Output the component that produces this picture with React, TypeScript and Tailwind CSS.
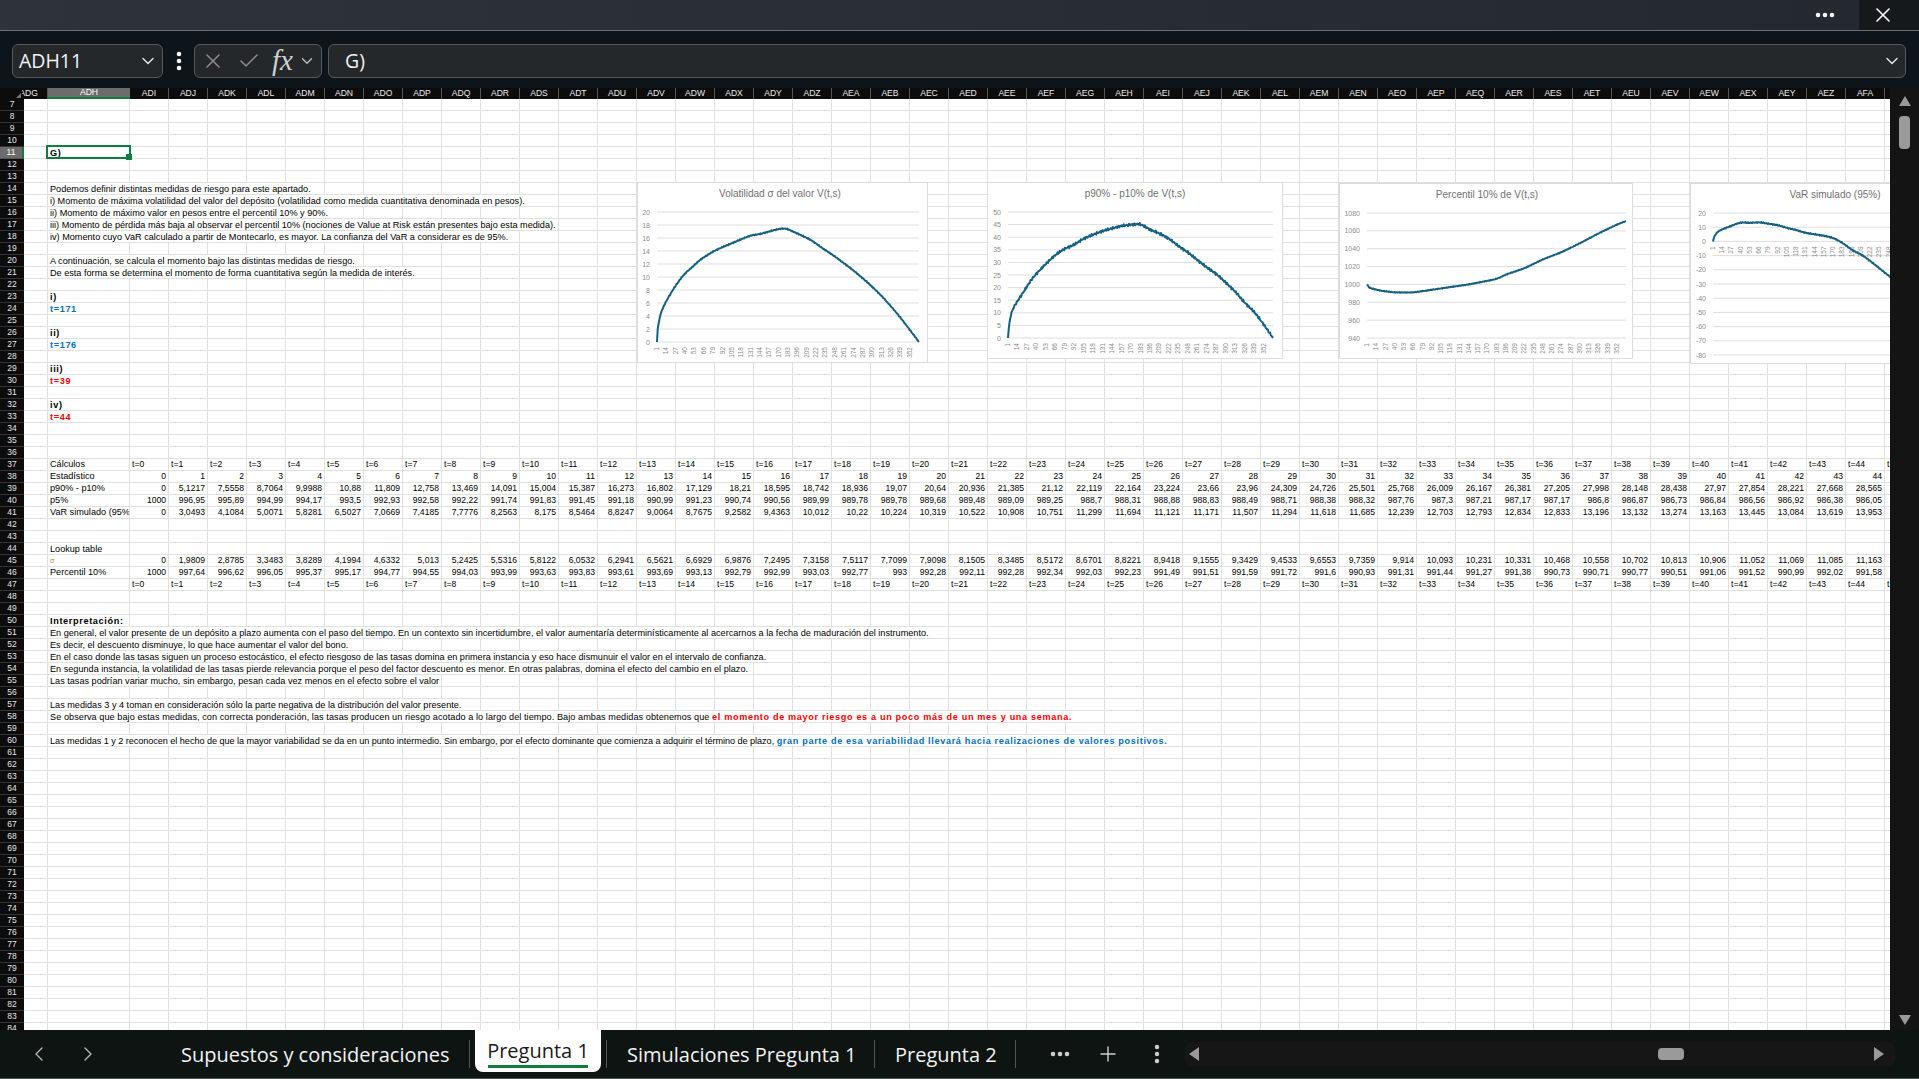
import type { ReactNode } from 'react';
import { Check, ChevronDown, ChevronLeft, ChevronRight, EllipsisVertical, Ellipsis, Plus, X } from 'lucide-react';

const letters = 'ABCDEFGHIJKLMNOPQRSTUVWXYZ'.split('');
const columnNames = [
  ...letters.slice(8).map((l) => `AD${l}`),
  ...letters.map((l) => `AE${l}`),
  'AFA',
  'AFB',
];

const firstRow = 7;
const lastRow = 84;

const tLabels = Array.from({ length: 46 }, (_, i) => `t=${i}`);
const counters = Array.from({ length: 45 }, (_, i) => String(i));

const p90p10 = '0 5,1217 7,5558 8,7064 9,9988 10,88 11,809 12,758 13,469 14,091 15,004 15,387 16,273 16,802 17,129 18,21 18,595 18,742 18,936 19,07 20,64 20,936 21,385 21,12 22,119 22,164 23,224 23,66 23,96 24,309 24,726 25,501 25,768 26,009 26,167 26,381 27,205 27,998 28,148 28,438 27,97 27,854 28,221 27,668 28,565'.split(' ');
const p5 = '1000 996,95 995,89 994,99 994,17 993,5 992,93 992,58 992,22 991,74 991,83 991,45 991,18 990,99 991,23 990,74 990,56 989,99 989,78 989,78 989,68 989,48 989,09 989,25 988,7 988,31 988,88 988,83 988,49 988,71 988,38 988,32 987,76 987,3 987,21 987,17 987,17 986,8 986,87 986,73 986,84 986,56 986,92 986,38 986,05'.split(' ');
const varSim = '0 3,0493 4,1084 5,0071 5,8281 6,5027 7,0669 7,4185 7,7776 8,2563 8,175 8,5464 8,8247 9,0064 8,7675 9,2582 9,4363 10,012 10,22 10,224 10,319 10,522 10,908 10,751 11,299 11,694 11,121 11,171 11,507 11,294 11,618 11,685 12,239 12,703 12,793 12,834 12,833 13,196 13,132 13,274 13,163 13,445 13,084 13,619 13,953'.split(' ');
const sigma = '0 1,9809 2,8785 3,3483 3,8289 4,1994 4,6332 5,013 5,2425 5,5316 5,8122 6,0532 6,2941 6,5621 6,6929 6,9876 7,2495 7,3158 7,5117 7,7099 7,9098 8,1505 8,3485 8,5172 8,6701 8,8221 8,9418 9,1555 9,3429 9,4533 9,6553 9,7359 9,914 10,093 10,231 10,331 10,468 10,558 10,702 10,813 10,906 11,052 11,069 11,085 11,163'.split(' ');
const p10 = '1000 997,64 996,62 996,05 995,37 995,17 994,77 994,55 994,03 993,99 993,63 993,83 993,61 993,69 993,13 992,79 992,99 993,03 992,77 993 992,28 992,11 992,28 992,34 992,03 992,23 991,49 991,51 991,59 991,72 991,6 990,93 991,31 991,44 991,27 991,38 990,73 990,71 990,77 990,51 991,06 991,52 990,99 992,02 991,58'.split(' ');

const dataRows: Record<number, { label: ReactNode; values: string[]; left?: boolean }> = {
  37: { label: 'Cálculos', values: tLabels, left: true },
  38: { label: 'Estadístico', values: counters },
  39: { label: 'p90% - p10%', values: p90p10 },
  40: { label: 'p5%', values: p5 },
  41: { label: 'VaR simulado (95%)', values: varSim },
  45: { label: <span className="text-[7px] text-[#c8772a]">σ</span>, values: sigma },
  46: { label: 'Percentil 10%', values: p10 },
  47: { label: '', values: tLabels, left: true },
};

const bold = (text: string) => <b className="tracking-[0.65px]">{text}</b>;
const blue = (text: string) => <b className="tracking-[0.65px] text-[#0070c0]">{text}</b>;
const red = (text: string) => <b className="tracking-[0.65px] text-[#ff0000]">{text}</b>;

const textRows: Record<number, ReactNode> = {
  11: bold('G)'),
  14: 'Podemos definir distintas medidas de riesgo para este apartado.',
  15: 'i) Momento de máxima volatilidad del valor del depósito (volatilidad como medida cuantitativa denominada en pesos).',
  16: 'ii) Momento de máximo valor en pesos entre el percentil 10% y 90%.',
  17: 'iii) Momento de pérdida más baja al observar el percentil 10% (nociones de Value at Risk están presentes bajo esta medida).',
  18: 'iv) Momento cuyo VaR calculado a partir de Montecarlo, es mayor. La confianza del VaR a considerar es de 95%.',
  20: 'A continuación, se calcula el momento bajo las distintas medidas de riesgo.',
  21: 'De esta forma se determina el momento de forma cuantitativa según la medida de interés.',
  23: bold('i)'),
  24: blue('t=171'),
  26: bold('ii)'),
  27: blue('t=176'),
  29: bold('iii)'),
  30: red('t=39'),
  32: bold('iv)'),
  33: red('t=44'),
  44: 'Lookup table',
  50: bold('Interpretación:'),
  51: 'En general, el valor presente de un depósito a plazo aumenta con el paso del tiempo. En un contexto sin incertidumbre, el valor aumentaría determinísticamente al acercarnos a la fecha de maduración del instrumento.',
  52: 'Es decir, el descuento disminuye, lo que hace aumentar el valor del bono.',
  53: 'En el caso donde las tasas siguen un proceso estocástico, el efecto riesgoso de las tasas domina en primera instancia y eso hace dismunuir el valor en el intervalo de confianza.',
  54: 'En segunda instancia, la volatilidad de las tasas pierde relevancia porque el peso del factor descuento es menor. En otras palabras, domina el efecto del cambio en el plazo.',
  55: 'Las tasas podrían variar mucho, sin embargo, pesan cada vez menos en el efecto sobre el valor',
  57: 'Las medidas 3 y 4 toman en consideración sólo la parte negativa de la distribución del valor presente.',
  58: (
    <>
      <span className="tracking-[0.06px]">Se observa que bajo estas medidas, con correcta ponderación, las tasas producen un riesgo acotado a lo largo del tiempo. Bajo ambas medidas obtenemos que </span>
      {red('el momento de mayor riesgo es a un poco más de un mes y una semana.')}
    </>
  ),
  60: (
    <>
      <span className="tracking-[-0.05px]">Las medidas 1 y 2 reconocen el hecho de que la mayor variabilidad se da en un punto intermedio. Sin embargo, por el efecto dominante que comienza a adquirir el término de plazo, </span>
      {blue('gran parte de esa variabilidad llevará hacia realizaciones de valores positivos.')}
    </>
  ),
};

type ChartDef = {
  title: string;
  titleX: number;
  box: string;
  width: number;
  height: number;
  left: number;
  right: number;
  top: number;
  bottom: number;
  ticks: number[];
  axis: number;
  noise: number;
  points: [number, number][];
};

const charts: ChartDef[] = [
  {
    title: 'Volatilidad σ del valor V(t,s)',
    titleX: 142,
    box: 'left-[637px] top-[94px] w-[291px] h-[181px]',
    width: 291,
    height: 181,
    left: 19,
    right: 281,
    top: 29,
    bottom: 159,
    ticks: [20, 18, 16, 14, 12, 10, 8, 6, 4, 2, 0],
    axis: 0,
    noise: 0.09,
    points: [[1, 0], [2, 2], [5, 4], [10, 5.5], [20, 7.5], [30, 9.2], [40, 10.6], [50, 11.5], [60, 12.6], [70, 13.3], [80, 14], [92, 14.6], [105, 15.2], [118, 15.8], [131, 16.4], [144, 16.6], [157, 17], [170, 17.4], [180, 17.5], [190, 17], [200, 16.5], [215, 15.7], [230, 14.5], [245, 13.4], [261, 12.1], [274, 11], [287, 9.8], [300, 8.5], [313, 7.1], [326, 5.5], [339, 3.8], [352, 1.9], [365, 0]],
  },
  {
    title: 'p90% - p10% de V(t,s)',
    titleX: 147,
    box: 'left-[987px] top-[94px] w-[296px] h-[177px]',
    width: 296,
    height: 177,
    left: 20,
    right: 285,
    top: 29,
    bottom: 155,
    ticks: [50, 45, 40, 35, 30, 25, 20, 15, 10, 5, 0],
    axis: 0,
    noise: 0.55,
    points: [[1, 0], [3, 7], [8, 12], [15, 15], [25, 19.5], [35, 24], [45, 27], [55, 30], [66, 33], [79, 35.5], [92, 37], [105, 39.5], [118, 41], [131, 42.5], [144, 43.5], [157, 44.5], [170, 45], [183, 45.3], [196, 43], [209, 41.5], [222, 39.5], [235, 36.5], [248, 34], [261, 31], [274, 28], [287, 25.5], [300, 22], [313, 18.5], [326, 14], [339, 10.5], [352, 5.5], [365, 0]],
  },
  {
    title: 'Percentil 10% de V(t,s)',
    titleX: 147,
    box: 'left-[1339px] top-[95px] w-[294px] h-[176px]',
    width: 294,
    height: 176,
    left: 27,
    right: 286,
    top: 29,
    bottom: 154,
    ticks: [1080, 1060, 1040, 1020, 1000, 980, 960, 940],
    axis: 940,
    noise: 0.45,
    points: [[1, 1000], [5, 996], [20, 993], [40, 991], [66, 991], [92, 994], [118, 997], [144, 1000], [170, 1004], [183, 1006], [196, 1011], [222, 1018], [248, 1028], [274, 1036], [300, 1046], [326, 1057], [352, 1067], [365, 1071]],
  },
  {
    title: 'VaR simulado (95%)',
    titleX: 144,
    box: 'left-[1690px] top-[95px] w-[294px] h-[181px]',
    width: 294,
    height: 181,
    left: 22,
    right: 281,
    top: 29,
    bottom: 171,
    ticks: [20, 10, 0, -10, -20, -30, -40, -50, -60, -70, -80],
    axis: 0,
    noise: 0.4,
    points: [[1, 0], [3, 4], [8, 7], [14, 8.5], [27, 11], [40, 13.5], [53, 13], [66, 13.5], [79, 12.5], [92, 11.5], [105, 9.5], [118, 8], [131, 6], [144, 5], [157, 4], [170, 2.5], [183, -1], [196, -6], [212, -10], [225, -15], [245, -23], [270, -33], [300, -46], [330, -60], [365, -75]],
  },
];

const xTicks = Array.from({ length: 28 }, (_, i) => 1 + i * 13);

function valueAt(points: [number, number][], t: number) {
  for (let i = 1; i < points.length; i++) {
    const [t0, v0] = points[i - 1];
    const [t1, v1] = points[i];
    if (t <= t1) return v0 + ((v1 - v0) * (t - t0)) / (t1 - t0);
  }
  return points[points.length - 1][1];
}

// piecewise points read off the picture, averaged so the kinks go away, the start stays steep
function smoothAt(points: [number, number][], t: number) {
  const reach = Math.min(5, Math.floor(t / 3), 365 - t);
  let sum = 0;
  for (let k = -reach; k <= reach; k++) sum += valueAt(points, t + k);
  return sum / (reach * 2 + 1);
}

function LineChart({ chart }: { chart: ChartDef }) {
  const max = chart.ticks[0];
  const min = chart.ticks[chart.ticks.length - 1];
  const x = (t: number) => chart.left + ((t - 1) * (chart.right - chart.left)) / 364;
  const y = (v: number) => chart.top + ((max - v) * (chart.bottom - chart.top)) / (max - min);
  const path: string[] = [];
  for (let t = 1; t <= 365; t++) {
    const edge = t < 4 || t > 362 ? 0 : 1;
    const wobble = edge * chart.noise * Math.sin(t * 12.9898) * Math.cos(t * 4.1414);
    path.push(`${x(t).toFixed(1)},${y(smoothAt(chart.points, t) + wobble).toFixed(1)}`);
  }
  return (
    <div className={`absolute z-20 border border-[#dcdcdc] bg-white ${chart.box}`}>
      <svg width={chart.width - 2} height={chart.height - 2} className="block font-['Liberation_Sans',sans-serif]">
        <text x={chart.titleX} y={14} textAnchor="middle" fontSize="10" fill="#707070">
          {chart.title}
        </text>
        {chart.ticks.map((tick) => (
          <g key={tick}>
            <line x1={chart.left} x2={chart.right} y1={y(tick)} y2={y(tick)} stroke="#dedede" strokeWidth="1" />
            <text x={chart.left - 7} y={y(tick) + 2.5} textAnchor="end" fontSize="7" fill="#8c8c8c">
              {tick}
            </text>
          </g>
        ))}
        {xTicks.map((tick) => (
          <text
            key={tick}
            x={x(tick) + 2}
            y={y(chart.axis) + 5}
            textAnchor="end"
            fontSize="6.5"
            fill="#8c8c8c"
            transform={`rotate(-90 ${x(tick) + 2} ${y(chart.axis) + 5})`}
          >
            {tick}
          </text>
        ))}
        <polyline points={path.join(' ')} fill="none" stroke="#156082" strokeWidth="2" strokeLinejoin="round" />
      </svg>
    </div>
  );
}

function LeadCell({ row }: { row: number }) {
  const data = dataRows[row];
  const text = textRows[row];
  return (
    <div className={`relative h-3 w-[82px] shrink-0 border-r border-b border-[#e0e0e0] text-[9.15px] ${data ? 'overflow-hidden' : ''}`}>
      {data && <span className="block whitespace-nowrap pl-[2px] leading-[11px]">{data.label}</span>}
      {text && <span className="relative z-10 inline-block h-[11px] whitespace-nowrap bg-white pl-[2px] pr-[1px] align-top leading-[12px]">{text}</span>}
      {row === 11 && (
        <div className="absolute top-[-2px] left-[-2px] z-10 h-[14px] w-[85px] border-2 border-[#107c41]">
          <div className="absolute right-[-3px] bottom-[-3px] h-[6px] w-[6px] bg-[#107c41]" />
        </div>
      )}
    </div>
  );
}

function SheetRow({ row }: { row: number }) {
  const data = dataRows[row];
  const active = row === 11;
  return (
    <div className="flex h-3">
      <div className={`flex h-3 w-6 shrink-0 items-center justify-center border-b text-[8.5px] ${active ? 'border-b-[#555] border-r-2 border-r-[#107c41] bg-[#6c6c6c] text-white' : 'border-b-[#333] bg-[#0c0c0c] text-[#e4e4e4]'}`}>
        {row}
      </div>
      <div className="h-3 w-6 shrink-0 border-r border-b border-[#e0e0e0]" />
      <LeadCell row={row} />
      {columnNames.map((name, i) => (
        <div
          key={name}
          className={`h-3 w-[39px] shrink-0 overflow-hidden whitespace-nowrap border-r border-b border-[#e0e0e0] leading-[11px] ${data?.left ? 'pl-[2px] text-left' : 'pr-[2px] text-right'}`}
        >
          {data?.values[i]}
        </div>
      ))}
    </div>
  );
}

function Sheet() {
  const rows = Array.from({ length: lastRow - firstRow + 1 }, (_, i) => firstRow + i);
  return (
    <div className="relative h-[942px] w-[1890px] shrink-0 overflow-hidden bg-white font-['Liberation_Sans',sans-serif] text-[8.6px] text-black">
      <div className="flex h-[11px] bg-[#0c0c0c] text-[8.6px] leading-[11px] text-[#e8e8e8]">
        <div className="relative z-10 w-[22px] shrink-0 bg-[#0c0c0c]">
          <span className="absolute right-[1px] bottom-[1px] h-0 w-0 border-b-[5px] border-l-[5px] border-b-[#777] border-l-transparent" />
        </div>
        <div className="flex w-[26px] shrink-0 justify-end border-r border-[#555] pr-[9px]">ADG</div>
        <div className="w-[82px] shrink-0 border-b-2 border-[#107c41] bg-[#6c6c6c] text-center leading-[9px] text-white">ADH</div>
        {columnNames.map((name) => (
          <div key={name} className="w-[39px] shrink-0 border-r border-[#555] text-center">
            {name}
          </div>
        ))}
      </div>
      {rows.map((row) => (
        <SheetRow key={row} row={row} />
      ))}
      {charts.map((chart) => (
        <LineChart key={chart.title} chart={chart} />
      ))}
    </div>
  );
}

function VerticalScroll() {
  return (
    <div className="relative flex h-[942px] w-[29px] flex-col items-center bg-[#141414] pt-2">
      <span className="h-0 w-0 border-x-[6px] border-b-[10px] border-x-transparent border-b-[#999]" />
      <div className="mt-[10px] h-[33px] w-[11px] rounded-[4px] bg-[#9a9a9a]" />
      <span className="absolute bottom-[5px] h-0 w-0 border-x-[6px] border-t-[10px] border-x-transparent border-t-[#999]" />
    </div>
  );
}

function TopBars() {
  return (
    <>
      <div className="flex h-[31px] items-center justify-end border-b border-[#6a6e70] bg-gradient-to-r from-[#2d3338] to-[#23292e] text-white">
        <Ellipsis className="mr-[22px] h-6 w-6" strokeWidth={2.5} />
        <div className="flex h-[30px] w-[60px] items-center justify-start bg-[#15191c] pl-[12px]">
          <X className="h-6 w-6" strokeWidth={1.6} />
        </div>
      </div>
      <div className="flex h-[57px] items-center bg-[#0e151a] pt-[2px] pr-[13px] pl-3 font-['Open_Sans',sans-serif] text-[#f2f2f2]">
        <div className="flex h-[34px] w-[151px] items-center justify-between rounded-[6px] border border-[#55595c] bg-[#25282b] pr-1 pl-[6px] text-[19.5px]">
          ADH11
          <ChevronDown className="h-5 w-5 text-[#e0e0e0]" strokeWidth={1.8} />
        </div>
        <EllipsisVertical className="ml-[4px] h-6 w-6 text-white" strokeWidth={2.6} />
        <div className="ml-[3px] flex h-[34px] w-[128px] items-center rounded-[6px] border border-[#55595c] bg-[#25282b] pl-[6px]">
          <X className="h-6 w-6 text-[#8b8b8b]" strokeWidth={1.5} />
          <Check className="ml-[12px] h-6 w-6 text-[#8b8b8b]" strokeWidth={1.5} />
          <span className="ml-[11px] font-['Liberation_Serif',serif] text-[29px] leading-none text-[#cfcfcf] italic">fx</span>
          <ChevronDown className="ml-[5px] h-[18px] w-[18px] text-[#bdbdbd]" strokeWidth={1.8} />
        </div>
        <div className="ml-[6px] flex h-[34px] flex-1 items-center justify-between rounded-[6px] border border-[#55595c] bg-[#25282b] pr-[3px] pl-4 text-[19.5px]">
          G)
          <ChevronDown className="h-5 w-5 text-[#e0e0e0]" strokeWidth={1.8} />
        </div>
      </div>
    </>
  );
}

function TabBar() {
  return (
    <div className="flex h-[49px] border-b border-[#555] bg-[#0d1412] font-['Open_Sans',sans-serif] text-[20px] text-[#f2f2f2]">
      <div className="flex h-[48px] w-[182px] shrink-0 items-center pl-[27px] text-[#b5b5b5]">
        <ChevronLeft className="h-6 w-6" strokeWidth={1.4} />
        <ChevronRight className="ml-[25px] h-6 w-6" strokeWidth={1.4} />
      </div>
      <div className="flex h-[48px] w-[287px] shrink-0 items-center pt-[2px]">
        <span className="-ml-px">Supuestos y consideraciones</span>
      </div>
      <div className="mt-[10px] h-7 w-px bg-[#555]" />
      <div className="ml-[5px] flex h-[42px] w-[126px] shrink-0 flex-col items-center rounded-b-lg bg-white text-[#1a1a1a]">
        <span className="mt-[7px] leading-[27px]">Pregunta 1</span>
        <span className="mt-px h-[3px] w-[100px] bg-[#107c41]" />
      </div>
      <div className="mt-[10px] ml-[5px] h-7 w-px bg-[#555]" />
      <div className="flex h-[48px] w-[267px] shrink-0 items-center pt-[2px] pl-5">Simulaciones Pregunta 1</div>
      <div className="mt-[10px] h-7 w-px bg-[#555]" />
      <div className="flex h-[48px] w-[140px] shrink-0 items-center pt-[2px] pl-5">Pregunta 2</div>
      <div className="mt-[10px] h-7 w-px bg-[#555]" />
      <div className="flex h-[48px] items-center text-[#d0d0d0]">
        <Ellipsis className="ml-[32px] h-6 w-6" strokeWidth={2.6} />
        <Plus className="ml-[24px] h-6 w-6" strokeWidth={1.4} />
        <EllipsisVertical className="ml-[25px] h-6 w-6" strokeWidth={2.4} />
      </div>
      <div className="mt-3 ml-4 flex h-6 w-[710px] items-center rounded-md bg-[#161616]">
        <span className="ml-[4px] h-0 w-0 border-y-[7px] border-r-[10px] border-y-transparent border-r-[#999]" />
        <div className="ml-[459px] h-[12px] w-[26px] rounded-[4px] bg-[#9a9a9a]" />
        <span className="ml-[190px] h-0 w-0 border-y-[7px] border-l-[10px] border-y-transparent border-l-[#999]" />
      </div>
    </div>
  );
}

export default function App() {
  return (
    <div className="flex h-[1079px] w-[1919px] flex-col overflow-hidden bg-[#0e151a]">
      <TopBars />
      <div className="flex">
        <Sheet />
        <VerticalScroll />
      </div>
      <TabBar />
    </div>
  );
}
